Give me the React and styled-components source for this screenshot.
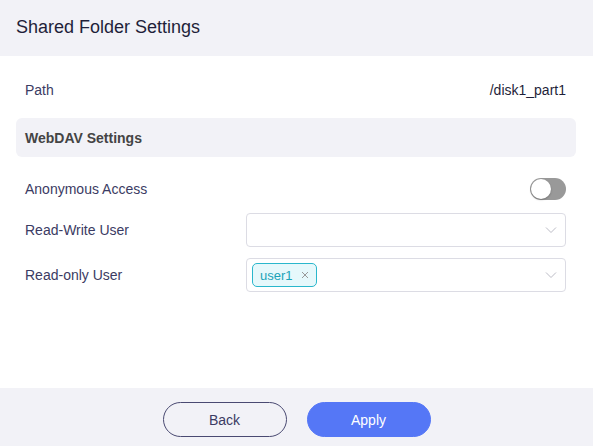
import React from "react";
import styled, { createGlobalStyle } from "styled-components";

const Global = createGlobalStyle`
  html, body { margin: 0; padding: 0; background: #fff; }
  body { font-family: "Liberation Sans", Arial, sans-serif; }
  * { box-sizing: border-box; }
`;

const Page = styled.div`
  width: 593px;
  height: 446px;
  display: flex;
  flex-direction: column;
  background: #fff;
`;

const Header = styled.div`
  height: 56px;
  background: #f2f2f7;
  display: flex;
  align-items: center;
  padding: 0 16px 2px;
  font-size: 18px;
  color: #1f1f3a;
`;

const Body = styled.div`
  flex: 1;
  padding: 16px 17px 0 16px;
  display: flex;
  flex-direction: column;
`;

const Row = styled.div`
  display: flex;
  align-items: center;
  justify-content: space-between;
  height: ${(p) => p.$h}px;
  margin-top: ${(p) => p.$mt || 0}px;
  padding: 0 10px 0 9px;
  font-size: 14px;
  color: #3b3b63;
`;

const Value = styled.span`
  color: #1f1f3a;
`;

const Section = styled.div`
  height: 39px;
  margin-top: 10px;
  background: #f2f2f7;
  border-radius: 6px;
  display: flex;
  align-items: center;
  padding: 0 9px;
  font-size: 14px;
  font-weight: bold;
  color: #444;
`;

const Toggle = styled.div`
  width: 36px;
  height: 22px;
  border-radius: 11px;
  background: #999;
  position: relative;
  &::after {
    content: "";
    position: absolute;
    left: 1px;
    top: 1px;
    width: 20px;
    height: 20px;
    border-radius: 50%;
    background: #fff;
    box-shadow: 0 1px 2px rgba(0, 0, 0, 0.25);
  }
`;

const Select = styled.div`
  width: 320px;
  height: 34px;
  border: 1px solid #dcdce4;
  border-radius: 4px;
  display: flex;
  align-items: center;
  padding: 0 8px 0 5px;
  background: #fff;
`;

const Tags = styled.div`
  flex: 1;
  display: flex;
  align-items: center;
`;

const Tag = styled.span`
  display: inline-flex;
  align-items: center;
  gap: 8px;
  height: 24px;
  padding: 0 7px 0 7px;
  background: #e6f8fb;
  border: 1px solid #2ab7cc;
  border-radius: 5px;
  color: #1aa3b8;
  font-size: 13px;
`;

const TagX = () => (
  <svg width="8" height="8" viewBox="0 0 8 8">
    <path d="M1 1 L7 7 M7 1 L1 7" stroke="#999" strokeWidth="1" />
  </svg>
);

const Chevron = () => (
  <svg width="12" height="8" viewBox="0 0 12 8">
    <path d="M1 1.5 L6 6.5 L11 1.5" fill="none" stroke="#bcbcc6" strokeWidth="1" />
  </svg>
);

const Footer = styled.div`
  height: 58px;
  background: #f2f2f7;
  display: flex;
  align-items: flex-start;
  justify-content: center;
  gap: 20px;
  padding-top: 14px;
`;

const Button = styled.button`
  width: 124px;
  height: 35px;
  border-radius: 18px;
  font-family: "Liberation Sans", Arial, sans-serif;
  font-size: 14px;
  cursor: pointer;
  border: 1px solid ${(p) => (p.$primary ? "#5577f6" : "#4a4a72")};
  background: ${(p) => (p.$primary ? "#5577f6" : "transparent")};
  color: ${(p) => (p.$primary ? "#fff" : "#3b3b63")};
`;

export default function App() {
  return (
    <Page>
      <Global />
      <Header>Shared Folder Settings</Header>
      <Body>
        <Row $h={36}>
          <span>Path</span>
          <Value>/disk1_part1</Value>
        </Row>
        <Section>WebDAV Settings</Section>
        <Row $h={44} $mt={10}>
          <span>Anonymous Access</span>
          <Toggle />
        </Row>
        <Row $h={34} $mt={2}>
          <span>Read-Write User</span>
          <Select>
            <Tags />
            <Chevron />
          </Select>
        </Row>
        <Row $h={34} $mt={11}>
          <span>Read-only User</span>
          <Select>
            <Tags>
              <Tag>
                user1
                <TagX />
              </Tag>
            </Tags>
            <Chevron />
          </Select>
        </Row>
      </Body>
      <Footer>
        <Button>Back</Button>
        <Button $primary>Apply</Button>
      </Footer>
    </Page>
  );
}
